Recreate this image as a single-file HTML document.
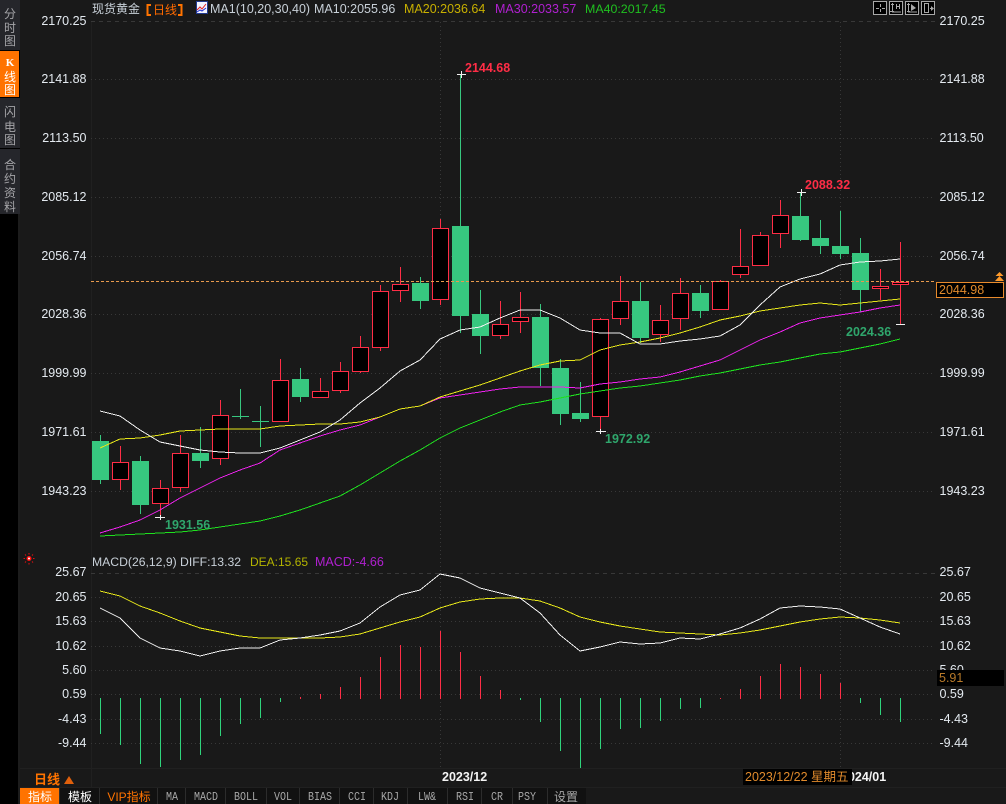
<!DOCTYPE html>
<html><head><meta charset="utf-8"><style>
html,body{margin:0;padding:0;background:#191919}
svg{display:block}
text{font-family:"Liberation Sans","Noto Sans CJK SC",sans-serif;font-size:12.5px}
.ax{fill:#e4eaf0}
.bd{font-weight:bold}
.tb{font-family:"Liberation Mono","Noto Sans CJK SC",monospace;font-size:12px;fill:#a8a8a8;text-anchor:middle}
.sb{fill:#a4a4a8;text-anchor:middle;font-size:12px}
.cj{font-size:12px}
.g{stroke:#383838;stroke-dasharray:1 3;fill:none}
.d{stroke:#383838;stroke-dasharray:4 4;fill:none}
.l{fill:none;stroke-width:1;shape-rendering:crispEdges}
</style></head><body>
<svg xmlns="http://www.w3.org/2000/svg" width="1006" height="804" viewBox="0 0 1006 804">
<rect width="1006" height="804" fill="#191919"/>
<!-- sidebar -->
<rect x="0" y="0" width="20" height="804" fill="#000"/>
<rect x="18" y="214" width="2" height="590" fill="#1c1c1c"/>
<rect x="0" y="0" width="20" height="50" fill="#25262b"/>
<rect x="0" y="51" width="19" height="46" fill="#ff7300"/>
<rect x="0" y="98" width="20" height="50" fill="#25262b"/>
<rect x="0" y="149" width="20" height="65" fill="#25262b"/>
<text class="sb" x="10" y="18">分</text><text class="sb" x="10" y="32">时</text><text class="sb" x="10" y="45">图</text>
<text class="sb" x="10" y="66" style="fill:#fff;font-family:'Liberation Serif',serif;font-size:11px;font-weight:bold">K</text><text class="sb" x="10" y="81" style="fill:#fff">线</text><text class="sb" x="10" y="94" style="fill:#fff">图</text>
<text class="sb" x="10" y="116">闪</text><text class="sb" x="10" y="131">电</text><text class="sb" x="10" y="144">图</text>
<text class="sb" x="10" y="169">合</text><text class="sb" x="10" y="183">约</text><text class="sb" x="10" y="197">资</text><text class="sb" x="10" y="211">料</text>
<!-- panel separators -->
<path d="M91.5 22V787" stroke="#202020"/>
<path d="M20 768.5H1006M20 787.5H1006" stroke="#202020"/>
<!-- grid -->
<path class="d" d="M91 21.5H935M91 573.5H935"/>
<path class="g" d="M91 79.5H935M91 138.5H935M91 197.5H935M91 256.5H935M91 314.5H935M91 373.5H935M91 432.5H935M91 491.5H935M91 597.5H935M91 621.5H935M91 646.5H935M91 670.5H935M91 694.5H935M91 719.5H935M91 743.5H935M440.5 22V767M840.5 22V767"/>
<!-- wicks -->
<path stroke="#ff2d46" shape-rendering="crispEdges" d="M120.5 446V490M160.5 480V517M180.5 435V492M220.5 400V465M280.5 359V422M320.5 378V398M340.5 362V393M360.5 336V373M380.5 285V351M400.5 267V302M440.5 219V305M500.5 301V339M520.5 292V333M600.5 318V431M620.5 276V325M660.5 305V342M680.5 278V330M720.5 280V309M740.5 229V278M760.5 232V266M780.5 200V248M880.5 269V300M900.5 242V324"/>
<path stroke="#37c77f" shape-rendering="crispEdges" d="M100.5 435V484M140.5 456V514M200.5 427V468M240.5 389V419M260.5 406V447M300.5 368V402M420.5 277V309M460.5 74V333M480.5 290V354M540.5 304V386M560.5 359V425M580.5 382V422M640.5 282V343M700.5 285V318M800.5 192V241M820.5 220V254M840.5 211V259M860.5 238V312"/>
<!-- green bodies -->
<g fill="#37c77f" shape-rendering="crispEdges">
<rect x="92" y="441" width="17" height="39"/><rect x="132" y="461" width="17" height="44"/><rect x="192" y="453" width="17" height="8"/><rect x="232" y="416" width="17" height="1"/><rect x="252" y="421" width="17" height="1"/><rect x="292" y="379" width="17" height="18"/><rect x="412" y="283" width="17" height="18"/><rect x="452" y="226" width="17" height="90"/><rect x="472" y="314" width="17" height="22"/><rect x="532" y="317" width="17" height="51"/><rect x="552" y="368" width="17" height="46"/><rect x="572" y="413" width="17" height="6"/><rect x="632" y="301" width="17" height="37"/><rect x="692" y="293" width="17" height="18"/><rect x="792" y="216" width="17" height="24"/><rect x="812" y="238" width="17" height="8"/><rect x="832" y="246" width="17" height="8"/><rect x="852" y="253" width="17" height="37"/>
</g>
<!-- red bodies -->
<g fill="#000" stroke="#ff2d46" shape-rendering="crispEdges">
<rect x="112.5" y="462.5" width="16" height="17"/><rect x="152.5" y="488.5" width="16" height="15"/><rect x="172.5" y="453.5" width="16" height="34"/><rect x="212.5" y="415.5" width="16" height="43"/><rect x="272.5" y="380.5" width="16" height="41"/><rect x="312.5" y="391.5" width="16" height="6"/><rect x="332.5" y="371.5" width="16" height="19"/><rect x="352.5" y="347.5" width="16" height="24"/><rect x="372.5" y="291.5" width="16" height="56"/><rect x="392.5" y="284.5" width="16" height="6"/><rect x="432.5" y="228.5" width="16" height="71"/><rect x="492.5" y="324.5" width="16" height="11"/><rect x="512.5" y="317.5" width="16" height="4"/><rect x="592.5" y="319.5" width="16" height="97"/><rect x="612.5" y="301.5" width="16" height="17"/><rect x="652.5" y="320.5" width="16" height="14"/><rect x="672.5" y="293.5" width="16" height="25"/><rect x="712.5" y="281.5" width="16" height="28"/><rect x="732.5" y="266.5" width="16" height="8"/><rect x="752.5" y="235.5" width="16" height="30"/><rect x="772.5" y="215.5" width="16" height="18"/><rect x="872.5" y="286.5" width="16" height="2"/><rect x="892.5" y="282.5" width="16" height="2"/>
</g>
<!-- MAs -->
<polyline class="l" stroke="#1fe01f" points="100,536 120,535 140,534 160,533 180,532 200,530 220,527 240,524 260,521 280,516 300,510 320,503 340,496 360,485 380,473 400,461 420,450 440,438 460,428 480,420 500,412 520,405 540,402 560,398 580,394 600,391 620,388 640,386 660,383 680,380 700,376 720,373 740,369 760,365 780,362 800,358 820,354 840,352 860,348 880,344 900,339"/>
<polyline class="l" stroke="#ee22ee" points="100,533 120,527 140,520 160,510 180,498 200,488 220,478 240,470 260,463 280,450 300,443 320,436 340,430 360,425 380,417 400,409 420,406 440,398 460,395 480,392 500,389 520,387 540,387 560,387 580,388 600,384 620,382 640,379 660,377 680,372 700,366 720,360 740,350 760,340 780,332 800,323 820,318 840,315 860,312 880,308 900,305"/>
<polyline class="l" stroke="#e6e61a" points="100,448 120,439 140,438 160,435 180,431 200,430 220,429 240,429 260,429 280,426 300,425 320,424 340,424 360,422 380,417 400,409 420,406 440,397 460,391 480,385 500,378 520,371 540,365 560,361 580,360 600,350 620,345 640,342 660,338 680,333 700,327 720,320 740,316 760,311 780,308 800,305 820,303 840,305 860,303 880,301 900,299"/>
<polyline class="l" stroke="#f0f0f0" points="100,411 120,416 140,430 160,442 180,446 200,450 220,452 240,453 260,453 280,448 300,440 320,432 340,420 360,403 380,388 400,371 420,360 440,339 460,330 480,327 500,318 520,310 540,310 560,318 580,330 600,333 620,333 640,344 660,344 680,341 700,339 720,336 740,325 760,305 780,287 800,279 820,274 840,265 860,262 880,261 900,259"/>
<!-- markers -->
<path stroke="#f0f0f0" shape-rendering="crispEdges" d="M457 74.5H466M461.5 71V78M797 192.5H806M801.5 189V196M155 517.5H165M160.5 515V520M596 431.5H606M600.5 429V434M896 324.5H905"/>
<!-- price line -->
<path d="M91 281.5H936" stroke="#e89a4c" stroke-dasharray="3 2" shape-rendering="crispEdges"/>
<!-- extrema labels -->
<text class="bd" x="465" y="72" fill="#ff2d46">2144.68</text>
<text class="bd" x="805" y="189" fill="#ff2d46">2088.32</text>
<text class="bd" x="165" y="529" fill="#2fa66c">1931.56</text>
<text class="bd" x="605" y="443" fill="#2fa66c">1972.92</text>
<text class="bd" x="846" y="336" fill="#2fa66c">2024.36</text>
<!-- left axis -->
<g class="ax" text-anchor="end">
<text x="86.5" y="25">2170.25</text><text x="86.5" y="83">2141.88</text><text x="86.5" y="142">2113.50</text><text x="86.5" y="201">2085.12</text><text x="86.5" y="260">2056.74</text><text x="86.5" y="318">2028.36</text><text x="86.5" y="377">1999.99</text><text x="86.5" y="436">1971.61</text><text x="86.5" y="495">1943.23</text>
<text x="86.5" y="576">25.67</text><text x="86.5" y="601">20.65</text><text x="86.5" y="625">15.63</text><text x="86.5" y="650">10.62</text><text x="86.5" y="674">5.60</text><text x="86.5" y="698">0.59</text><text x="86.5" y="723">-4.43</text><text x="86.5" y="747">-9.44</text>
</g>
<!-- right axis -->
<g class="ax">
<text x="939.500" y="25">2170.25</text><text x="939.500" y="83">2141.88</text><text x="939.500" y="142">2113.50</text><text x="939.500" y="201">2085.12</text><text x="939.500" y="260">2056.74</text><text x="939.500" y="318">2028.36</text><text x="939.500" y="377">1999.99</text><text x="939.500" y="436">1971.61</text><text x="939.500" y="495">1943.23</text>
<text x="939.500" y="576">25.67</text><text x="939.500" y="601">20.65</text><text x="939.500" y="625">15.63</text><text x="939.500" y="650">10.62</text><text x="939.500" y="674">5.60</text><text x="939.500" y="698">0.59</text><text x="939.500" y="723">-4.43</text><text x="939.500" y="747">-9.44</text>
</g>
<!-- price box -->
<rect x="936.5" y="282.5" width="67" height="15" fill="#000" stroke="#e88a2c" shape-rendering="crispEdges"/>
<text x="939" y="294" fill="#e08a2c">2044.98</text>
<path d="M999.5 272l4 4h-8zM999.5 276l4.500 5h-9z" fill="#ff9a2a"/>
<rect x="937" y="670" width="67" height="16" fill="#000"/>
<text x="939" y="682" fill="#b87a2a">5.91</text>
<!-- top legend -->
<text class="cj" x="92" y="13" fill="#c8d0d8">现货黄金</text>
<path d="M151 5H147.500V15H151" stroke="#ff7300" stroke-width="2" fill="none"/>
<text class="cj" x="153" y="14" fill="#ff6a00">日线</text>
<path d="M178 5H181.500V15H178" stroke="#ff7300" stroke-width="2" fill="none"/>
<rect x="196.500" y="1.500" width="11" height="12" fill="#f4f4ff" stroke="#223a90" stroke-width="1"/>
<path d="M197 10l3-3 2 2 4-5" stroke="#e02020" fill="none"/><path d="M197 12l3-2 2 1 4-3" stroke="#2030d0" fill="none"/>
<text x="210" y="13" fill="#c8d0d8">MA1(10,20,30,40)</text>
<text x="314" y="13" fill="#c8d0d8">MA10:2055.96</text>
<text x="404" y="13" fill="#c8b000">MA20:2036.64</text>
<text x="495" y="13" fill="#b020d0">MA30:2033.57</text>
<text x="585" y="13" fill="#20c020" style="font-size:12.4px">MA40:2017.45</text>
<!-- toolbar -->
<g fill="#000" stroke="#a8a8a8" shape-rendering="crispEdges">
<rect x="873.500" y="1.500" width="13" height="13"/><rect x="889.500" y="1.500" width="13" height="13"/><rect x="905.500" y="1.500" width="13" height="13"/><rect x="921.500" y="1.500" width="13" height="13"/>
</g>
<g stroke="#a8a8a8" fill="none" shape-rendering="crispEdges">
<path d="M880.500 4V7M880.500 9V12M876 8.500H879M882 8.500H885"/>
<path d="M892.500 3V12H901M891 4.500H894M890 11.500H894M896.500 4V9M899.500 4V9M897 6.500H899"/>
<path d="M908.500 3V12H917M907 4.500H910M907 11.500H910"/>
<path d="M924.500 3V13M928.500 3V13M924 3.500H929M924 12.500H929M930 8.500H933"/>
</g>
<path d="M911 4L916 8L911 11Z" fill="#a8a8a8"/>
<path d="M931 6l3 2.500-3 2.500z" fill="#a8a8a8"/>
<!-- MACD legend -->
<circle cx="29" cy="558.500" r="2.500" fill="#ff1010"/><circle cx="29" cy="558.500" r="1" fill="#fff"/>
<path d="M29 553v1.500M29 563v1.500M23.500 558.500h1.500M33 558.500h1.500M25 554.500l1 1M32 561.500l1 1M33 554.500l-1 1M26 561.500l-1 1" stroke="#e01010"/>
<text x="92" y="566" fill="#c8d0d8" style="font-size:12.2px">MACD(26,12,9) DIFF:13.32</text>
<text x="250" y="566" fill="#b4b400" style="font-size:12px">DEA:15.65</text>
<text x="315" y="566" fill="#b020d0">MACD:-4.66</text>
<!-- MACD bars -->
<path stroke="#2fd47c" shape-rendering="crispEdges" d="M100.500 698V734M120.500 698V745M140.500 698V764M160.500 698V767M180.500 698V760M200.500 698V755M220.500 698V736M240.500 698V724M260.500 698V718M280.500 698V702M520.500 698V700M540.500 698V722M560.500 698V751M580.500 698V768M600.500 698V749M620.500 698V729M640.500 698V728M660.500 698V721M680.500 698V709M700.500 698V708M860.500 698V703M880.500 698V715M900.500 698V722"/>
<path stroke="#ff2d46" shape-rendering="crispEdges" d="M300.500 697V699M320.500 694V699M340.500 687V699M360.500 677V699M380.500 657V699M400.500 645V699M420.500 647V699M440.500 631V699M460.500 652V699M480.500 676V699M500.500 690V699M720.500 698V699M740.500 689V699M760.500 676V699M780.500 664V699M800.500 667V699M820.500 674V699M840.500 683V699"/>
<polyline class="l" stroke="#e6e61a" points="100,591 120,596 140,606 160,613 180,621 200,628 220,632 240,636 260,638 280,638 300,638 320,638 340,637 360,634 380,628 400,622 420,617 440,608 460,602 480,599 500,598 520,598 540,601 560,608 580,617 600,622 620,626 640,629 660,632 680,633 700,634 720,635 740,633 760,630 780,626 800,622 820,619 840,617 860,618 880,620 900,623"/>
<polyline class="l" stroke="#f0f0f0" points="100,608 120,618 140,638 160,648 180,651 200,656 220,651 240,648 260,648 280,640 300,638 320,635 340,631 360,623 380,607 400,595 420,590 440,574 460,578 480,588 500,593 520,598 540,613 560,635 580,651 600,647 620,642 640,644 660,643 680,638 700,639 720,634 740,628 760,619 780,608 800,606 820,607 840,609 860,618 880,627 900,634"/>
<!-- bottom date row -->
<text x="34" y="784" fill="#ff7300" style="font-size:13px;font-weight:bold">日线</text>
<path d="M64 784l5-8 5 8z" fill="#e0600c"/>
<text class="bd" x="442" y="781" fill="#f4f4f4">2023/12</text>
<text class="bd" x="841" y="781" fill="#f4f4f4">2024/01</text>
<rect x="743" y="769" width="109" height="16" fill="#000"/>
<text x="745" y="781" fill="#e08a2c">2023/12/22 星期五</text>
<!-- tabs -->
<rect x="20" y="788" width="566" height="16" fill="#111"/>
<rect x="20" y="788" width="39" height="16" fill="#ff7300"/>
<path d="M59.500 788V804M99.500 788V804M157.500 788V804M185.500 788V804M225.500 788V804M266.500 788V804M299.500 788V804M339.500 788V804M373.500 788V804M407.500 788V804M447.500 788V804M481.500 788V804M512.500 788V804M547.500 788V804" stroke="#2c2c2c"/>
<text class="cj" x="40" y="801" fill="#fff" text-anchor="middle">指标</text>
<text class="cj" x="80" y="801" fill="#fff" text-anchor="middle">模板</text>
<text class="cj" x="129" y="801" fill="#ff7300" text-anchor="middle">VIP指标</text>
<text class="tb" x="172" y="800" textLength="12" lengthAdjust="spacingAndGlyphs">MA</text><text class="tb" x="206" y="800" textLength="24" lengthAdjust="spacingAndGlyphs">MACD</text><text class="tb" x="246" y="800" textLength="24" lengthAdjust="spacingAndGlyphs">BOLL</text><text class="tb" x="283" y="800" textLength="18" lengthAdjust="spacingAndGlyphs">VOL</text><text class="tb" x="320" y="800" textLength="24" lengthAdjust="spacingAndGlyphs">BIAS</text><text class="tb" x="357" y="800" textLength="18" lengthAdjust="spacingAndGlyphs">CCI</text><text class="tb" x="390" y="800" textLength="18" lengthAdjust="spacingAndGlyphs">KDJ</text><text class="tb" x="427" y="800" textLength="18" lengthAdjust="spacingAndGlyphs">LW&amp;</text><text class="tb" x="465" y="800" textLength="18" lengthAdjust="spacingAndGlyphs">RSI</text><text class="tb" x="497" y="800" textLength="12" lengthAdjust="spacingAndGlyphs">CR</text><text class="tb" x="527" y="800" textLength="18" lengthAdjust="spacingAndGlyphs">PSY</text>
<text class="cj" x="566" y="801" fill="#a8a8a8" text-anchor="middle">设置</text>
</svg>
</body></html>
